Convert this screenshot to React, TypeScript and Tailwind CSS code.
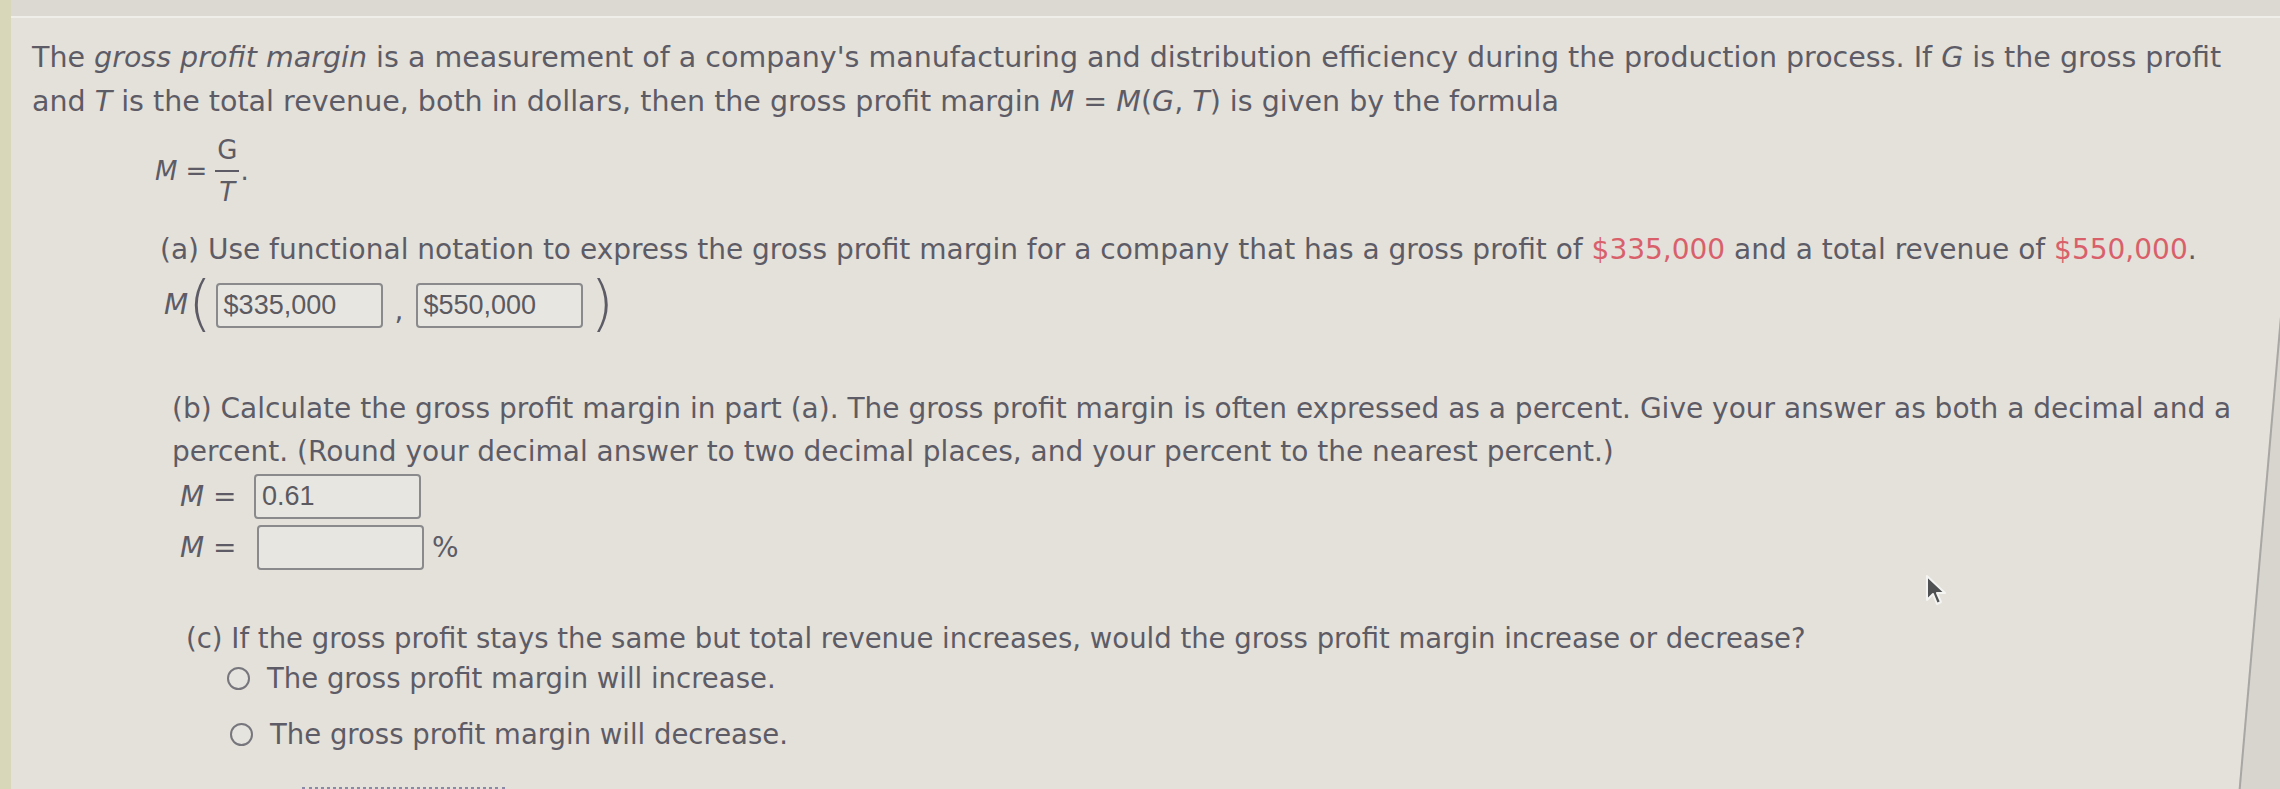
import React from "react";

const font = { fontFamily: '"DejaVu Sans", Verdana, sans-serif' };

function AnswerBox({ value, className = "" }: { value?: string; className?: string }) {
  return (
    <div
      className={`flex h-[45px] w-[167px] items-center rounded-[4px] border-[2px] border-[#8a8a8c] bg-[#e8e6e1] px-[6px] text-[27px] text-[#5b5a60] ${className}`}
      style={{ fontFamily: '"Liberation Sans", Arial, sans-serif' }}
    >
      {value}
    </div>
  );
}

function Radio({ label }: { label: string }) {
  return (
    <label className="flex items-center gap-[17px]">
      <span className="h-[23px] w-[23px] shrink-0 rounded-full border-[2px] border-[#77767c] bg-[#e6e4df]" />
      <span>{label}</span>
    </label>
  );
}

function Fraction() {
  return (
    <div className="flex items-center gap-[8px] text-[26px]">
      <i>M</i>
      <span>=</span>
      <div className="flex flex-col items-center leading-[40px]">
        <span className="border-b-[2px] border-[#5d5c66] px-[2px]">G</span>
        <i>T</i>
      </div>
      <span className="-ml-[7px]">.</span>
    </div>
  );
}

export default function App() {
  return (
    <div
      className="relative flex h-[789px] w-[2280px] overflow-hidden bg-[#e4e1da] text-[28px] text-[#5d5c66]"
      style={font}
    >
      <div className="w-[11px] shrink-0 bg-[#d8d7ba]" />
      <div className="flex flex-1 flex-col">
        <div className="h-[18px] shrink-0 border-b-[2px] border-[#efeee9] bg-[#dcd9d3]" />

        <div className="flex flex-col pl-[21px] pt-[18px]">
          <p className="w-[2215px] text-[28.5px] leading-[44px]">
            The <i>gross profit margin</i> is a measurement of a company's manufacturing and
            distribution efficiency during the production process. If <i>G</i> is the gross profit
            and <i>T</i> is the total revenue, both in dollars, then the gross profit margin{" "}
            <i>M</i> = <i>M</i>(<i>G</i>, <i>T</i>) is given by the formula
          </p>

          <div className="ml-[123px] mt-[6px]">
            <Fraction />
          </div>

          <div className="ml-[128px] mt-[16px] flex flex-col">
            <p className="leading-[44px]">
              (a) Use functional notation to express the gross profit margin for a company that has a
              gross profit of <span className="text-[#d9606b]">$335,000</span> and a total revenue of{" "}
              <span className="text-[#d9606b]">$550,000</span>.
            </p>
            <div className="mt-[4px] flex items-center">
              <i className="ml-[4px]">M</i>
              <span className="-mt-[4px] text-[60px] font-thin leading-[62px]">(</span>
              <AnswerBox value="$335,000" className="ml-[4px]" />
              <span className="mx-[12px] mt-[12px]">,</span>
              <AnswerBox value="$550,000" />
              <span className="ml-[8px] -mt-[4px] text-[60px] font-thin leading-[62px]">)</span>
            </div>
          </div>

          <div className="ml-[140px] mt-[53px] flex flex-col">
            <p className="w-[2080px] leading-[43px]">
              (b) Calculate the gross profit margin in part (a). The gross profit margin is often
              expressed as a percent. Give your answer as both a decimal and a percent. (Round your
              decimal answer to two decimal places, and your percent to the nearest percent.)
            </p>
            <div className="ml-[8px] mt-[1px] flex flex-col gap-[6px]">
              <div className="flex items-center gap-[12px]">
                <span className="w-[62px]">
                  <i>M</i> =
                </span>
                <AnswerBox value="0.61" />
              </div>
              <div className="flex items-center gap-[12px]">
                <span className="w-[65px]">
                  <i>M</i> =
                </span>
                <AnswerBox />
                <span className="-ml-[4px]">%</span>
              </div>
            </div>
          </div>

          <div className="ml-[154px] mt-[47px] flex flex-col text-[27.5px]">
            <p className="leading-[42px]">
              (c) If the gross profit stays the same but total revenue increases, would the gross
              profit margin increase or decrease?
            </p>
            <div className="ml-[41px] mt-[-2px] flex flex-col gap-[14px] leading-[42px]">
              <Radio label="The gross profit margin will increase." />
              <div className="ml-[3px]">
                <Radio label="The gross profit margin will decrease." />
              </div>
            </div>
            <div className="ml-[116px] mt-[32px] w-[203px] border-b-[3px] border-dotted border-[#8b8aa6]" />
          </div>
        </div>
      </div>

      {/* right bezel */}
      <div className="absolute right-[-72px] top-[-40px] h-[900px] w-[80px] rotate-[5deg] border-l-[2px] border-[#a9a7a3] bg-[#d8d5cf]" />

      {/* mouse pointer */}
      <svg
        className="absolute left-[1924px] top-[574px]"
        width="26"
        height="34"
        viewBox="0 0 26 34"
      >
        <path
          d="M3 2 L3 26 L9 20 L13 30 L17 28 L13 19 L21 19 Z"
          fill="#4f5152"
          stroke="#f4f4f2"
          strokeWidth="2"
          strokeLinejoin="round"
        />
      </svg>
    </div>
  );
}
